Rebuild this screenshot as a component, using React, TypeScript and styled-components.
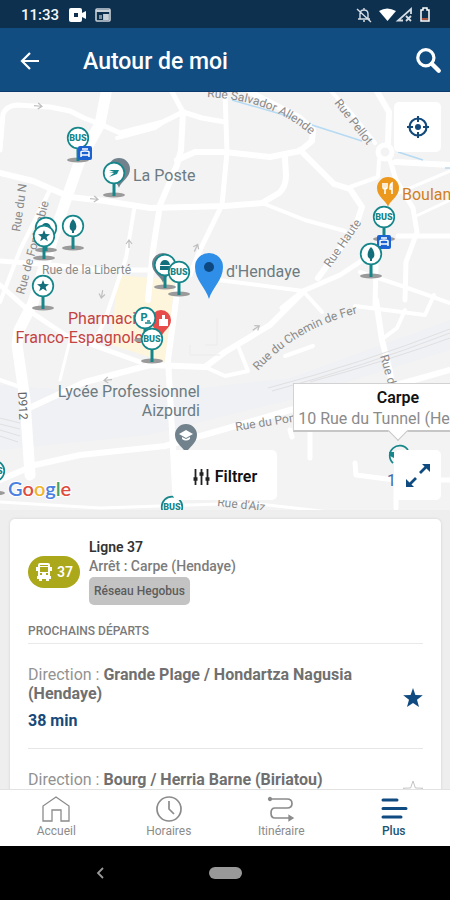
import React from "react";
import styled, { createGlobalStyle } from "styled-components";

const teal = "#16868a";
const navy = "#0f4a80";

const GlobalStyle = createGlobalStyle`
  * { box-sizing: border-box; }
  body { margin: 0; font-family: Roboto, "Liberation Sans", sans-serif; }
  button { border: 0; padding: 0; background: none; font: inherit; color: inherit; cursor: pointer; }
  h1, h2, h3, p, ul { margin: 0; padding: 0; }
  svg { display: block; }
`;

const Screen = styled.div`
  height: 100vh;
  display: flex;
  flex-direction: column;
  overflow: hidden;
  background: #eeeeee;
`;

const StatusBar = styled.div`
  flex: none;
  height: 28px;
  padding: 2px 20px 0 21px;
  display: flex;
  align-items: center;
  justify-content: space-between;
  background: #0d304f;
  color: #f4f7fa;
  font-size: 15px;
  font-weight: 500;
`;

const StatusGroup = styled.div<{ $gap: number }>`
  display: flex;
  align-items: center;
  gap: ${(p) => p.$gap}px;
`;

const Header = styled.header`
  flex: none;
  height: 64px;
  padding: 2px 8px 0 18px;
  display: flex;
  align-items: center;
  background: #124d82;
  border-bottom: 1px solid #0b3a6e;
  color: #ffffff;
`;

const HeaderTitle = styled.h1`
  flex: 1;
  padding: 2px 0 0 41px;
  font-size: 23px;
  line-height: 28px;
  font-weight: 500;
`;

const IconButton = styled.button`
  display: flex;
  align-items: center;
  justify-content: center;
`;

const MapArea = styled.section`
  flex: none;
  height: 418px;
  position: relative;
  overflow: hidden;
  background: #f3f3f3;
`;

const MapCanvas = styled.svg`
  width: 100%;
  height: 100%;
`;

const MapButton = styled.button<{ $edge: "top" | "bottom" }>`
  position: absolute;
  right: 9px;
  ${(p) => p.$edge}: 10px;
  width: 47px;
  height: 50px;
  display: flex;
  align-items: center;
  justify-content: center;
  border-radius: 5px;
  background: #ffffff;
`;

const FilterButton = styled.button`
  position: absolute;
  left: 50%;
  bottom: 10px;
  transform: translateX(-50%);
  width: 104px;
  height: 50px;
  padding-top: 3px;
  display: flex;
  align-items: center;
  justify-content: center;
  gap: 5px;
  border-radius: 5px;
  background: #ffffff;
  color: #111111;
  font-size: 16px;
  font-weight: 600;
`;

const Callout = styled.div`
  position: absolute;
  right: -53px;
  top: 291px;
  width: 210px;
  height: 49px;
  padding: 4px 0;
  background: #ffffff;
  border: 1px solid #d2d2d2;
  border-bottom: 2px solid #c6c6c6;
  text-align: center;
  &::after {
    content: "";
    position: absolute;
    left: 50%;
    bottom: -8px;
    width: 13px;
    height: 13px;
    margin-left: -7px;
    background: #ffffff;
    border: solid #c6c6c6;
    border-width: 0 1px 1px 0;
    transform: rotate(45deg);
  }
`;

const CalloutTitle = styled.h2`
  font-size: 16px;
  line-height: 19px;
  font-weight: 600;
  color: #111111;
`;

const CalloutText = styled.p`
  position: relative;
  z-index: 1;
  font-size: 16px;
  line-height: 23px;
  color: #8b8b8b;
  white-space: nowrap;
`;

const Sheet = styled.main`
  flex: 1;
  min-height: 0;
  overflow: hidden;
  padding: 9px 9px 0 10px;
`;

const Card = styled.article`
  padding: 19px 18px;
  background: #ffffff;
  border-radius: 5px;
  box-shadow: 0 0 3px rgba(0, 0, 0, 0.12);
`;

const LineHeader = styled.div`
  display: flex;
  align-items: center;
  gap: 9px;
`;

const LineBadge = styled.span`
  width: 52px;
  height: 32px;
  display: flex;
  align-items: center;
  justify-content: center;
  gap: 4px;
  border-radius: 16px;
  background: #aba81b;
  color: #ffffff;
  font-size: 14px;
  font-weight: 600;
`;

const LineInfo = styled.div`
  display: flex;
  flex-direction: column;
  align-items: flex-start;
`;

const LineName = styled.h2`
  font-size: 14px;
  line-height: 18px;
  font-weight: 600;
  color: #333333;
`;

const StopName = styled.p`
  font-size: 14px;
  line-height: 20px;
  font-weight: 500;
  color: #7c7c7c;
`;

const NetworkTag = styled.span`
  height: 28px;
  margin-top: 1px;
  padding: 0 5px;
  border-radius: 5px;
  background: #c3c3c3;
  color: #5c5c5c;
  font-size: 12px;
  line-height: 29px;
  font-weight: 500;
`;

const SectionTitle = styled.h3`
  margin-top: 18px;
  padding-bottom: 4px;
  border-bottom: 1px solid #e9e9e9;
  font-size: 12px;
  line-height: 16px;
  font-weight: 500;
  color: #7a7a7a;
`;

const DepartureList = styled.ul`
  list-style: none;
`;

const Departure = styled.li`
  display: flex;
  align-items: center;
  justify-content: space-between;
  padding: 21px 0 17px;
  border-bottom: 1px solid #e6e6e6;
`;

const DepartureText = styled.div`
  flex: 1;
  min-height: 42px;
  padding-right: 30px;
`;

const Direction = styled.p`
  font-size: 16px;
  line-height: 19px;
  color: #929292;
  b {
    font-weight: 700;
    color: #707070;
  }
`;

const Delay = styled.p`
  margin-top: 7px;
  font-size: 16px;
  line-height: 21px;
  font-weight: 700;
  color: #17497b;
`;

const TabBar = styled.nav`
  flex: none;
  height: 57px;
  display: grid;
  grid-template-columns: repeat(4, 1fr);
  background: #ffffff;
  border-top: 1px solid #e2e2e2;
`;

const Tab = styled.button<{ $active?: boolean }>`
  display: flex;
  flex-direction: column;
  align-items: center;
  padding-top: 5px;
  gap: 1px;
  font-size: 12px;
  line-height: 14px;
  color: ${(p) => (p.$active ? "#1c5476" : "#8b8b8b")};
  font-weight: ${(p) => (p.$active ? 500 : 400)};
`;

const SystemNav = styled.div`
  flex: none;
  height: 54px;
  display: grid;
  grid-template-columns: 200px 1fr 200px;
  align-items: center;
  justify-items: center;
  background: #000000;
  color: #999999;
`;

const HomePill = styled.button`
  width: 33px;
  height: 12px;
  border-radius: 6px;
  background: #999999;
`;

const roads: [string, number][] = [
  ["M0 150 L3 114 Q6 106 17 105 L50 107 L70 111 L84 118 L100 124", 5],
  ["M107 88 L100 124 L80 160 L67 197 L50 247 L33 303 L19 330 L17 345 L25 400 L30 475", 11],
  ["M100 124 L120 133 L163 122 L183 112 L170 88", 5],
  ["M117 138 L155 128 L168 119", 4],
  ["M183 112 L181 150 L177 165 L160 205 L153 250 L148 300", 6],
  ["M183 112 L202 118 L225 122", 5],
  ["M0 173 L33 181 L70 197 L105 201 L150 208 L225 206 L262 203 L279 193 Q286 187 286 175 L285 158", 6],
  ["M177 160 L195 152 L225 152 L270 157 L300 151 L312 141 L313 130 L300 118 L250 92", 6],
  ["M225 92 L227 152 L222 205 L200 250 L190 275", 5],
  ["M262 203 L305 220 L345 231", 4],
  ["M300 150 L334 184 L350 189 L362 207 L355 228 L318 278", 6],
  ["M350 187 L378 177 L379 160", 4],
  ["M330 90 L352 114 L375 143", 4],
  ["M375 88 L389 112 L388 143", 6],
  ["M396 162 L450 165", 6],
  ["M390 160 L396 180 L413 208 L417 232 L406 262 L405 300", 5],
  ["M396 194 L450 171", 3],
  ["M414 217 L450 200", 3],
  ["M398 236 L450 236", 5],
  ["M375 252 L340 275 L303 291 L282 308", 5],
  ["M218 280 L250 284 L303 291 L322 312", 4],
  ["M360 272 L405 287 L450 303", 4],
  ["M376 265 L375 306", 5],
  ["M0 261 L40 264 L100 270 L165 270", 5],
  ["M50 190 L20 250 L0 302", 4],
  ["M0 285 L28 310 L65 335 L140 362", 5],
  ["M134 210 L126 258 L105 320 L93 345", 4],
  ["M70 340 L60 380", 3],
  ["M25 410 L85 382 L150 365 L205 367 L225 352 L270 325 L303 292", 6],
  ["M178 285 L168 360 L172 430 L176 510", 6],
  ["M205 367 L225 376 L248 371 L238 346", 4],
  ["M0 480 L35 465 L80 455 L165 446 L225 429 L290 410 L400 384 L450 370", 6],
  ["M0 380 L20 387", 4],
  ["M355 306 L425 315 L434 295", 4],
  ["M376 300 L382 340 L390 372 L394 400", 6],
  ["M405 310 L397 328 L385 337", 4],
  ["M285 356 L313 346", 4],
  ["M310 428 L310 458", 5],
  ["M290 430 L292 437 M355 463 L356 475 L395 480 L450 480 M396 480 L396 508", 5],
  ["M0 502 L100 508 L250 503 L330 512", 3],
];

type Glyph = "bus" | "star" | "leaf" | "post" | "shop" | "park";

const glyphs: Record<Glyph, React.ReactNode> = {
  bus: (
    <text y="3" textAnchor="middle" fontSize="9" fontWeight="900" fill={teal}>
      BUS
    </text>
  ),
  star: <path d="M0-6 1.6-2 6-1.8 2.6 1 3.8 5.2 0 2.8-3.8 5.2-2.6 1-6-1.8-1.6-2Z" fill="#126f7b" />,
  leaf: <path d="M0-7C3-4 4 0 3 3L1 5V7H-1V5L-3 3C-4 0-3-4 0-7Z" fill="#126f7b" />,
  post: <path d="M-5-3H5L3 1-5 4 0 0H-5L0-1Z" fill={teal} />,
  shop: <path d="M-5 0Q-4-5 0-5T5 0ZM-5 1H5V5H-5Z" fill="#126f7b" />,
  park: (
    <>
      <text x="-1" y="3" textAnchor="middle" fontSize="11" fontWeight="800" fill={teal}>
        P
      </text>
      <path d="M0 5H6M2 3H5" stroke={teal} strokeWidth="1.3" />
    </>
  ),
};

const StopMarker = ({ x, y, glyph }: { x: number; y: number; glyph: Glyph }) => (
  <g transform={`translate(${x} ${y})`}>
    <ellipse cy="22" rx="11" ry="2.4" fill="#9a9a9a" />
    <path d="M0 10V23" stroke={teal} strokeWidth="3" />
    <circle r="10.3" fill="#ffffff" stroke={teal} strokeWidth="1.7" />
    {glyphs[glyph]}
  </g>
);

const PlacePin = ({ x, y, r, fill, children }: { x: number; y: number; r: number; fill: string; children?: React.ReactNode }) => (
  <g transform={`translate(${x} ${y})`}>
    <g transform={`scale(${r / 10})`}>
      <path d="M0 17C-2 11-10 8-10 0A10 10 0 0 1 10 0C10 8 2 11 0 17Z" fill={fill} />
    </g>
    {children}
  </g>
);

const TramBadge = ({ x, y }: { x: number; y: number }) => (
  <g transform={`translate(${x} ${y})`}>
    <rect x="-7" y="-7" width="14" height="14" rx="2" fill="#1c62d1" />
    <path d="M-3-4H3M-4 4V-1Q-4-2 0-2T4-1V4M-4 2H4" fill="none" stroke="#ffffff" strokeWidth="1.5" />
  </g>
);

const OneWayArrow = ({ x, y, angle }: { x: number; y: number; angle: number }) => (
  <path
    transform={`translate(${x} ${y}) rotate(${angle})`}
    d="M-4 0H3M0-3 4 0 0 3"
    fill="none"
    stroke="#bfbfbf"
    strokeWidth="1.2"
  />
);

const StreetMap = () => (
  <MapCanvas
    viewBox="0 92 450 418"
    preserveAspectRatio="xMidYMid slice"
    fontFamily='Roboto, "Liberation Sans", sans-serif'
    role="img"
    aria-label="Hendaye"
  >
    <path d="M0 385 L140 395 L290 378 L450 320 V350 L290 400 L150 435 L0 450Z" fill="#f0f1f4" />
    <path d="M117 275 L175 280 L165 362 L112 345Z" fill="#fdf5dc" />
    <g fill="none" stroke="#ffffff" strokeLinecap="round" strokeLinejoin="round">
      {roads.map(([d, w]) => (
        <path key={d} d={d} strokeWidth={w} />
      ))}
    </g>
    <circle cx="385" cy="152" r="7" fill="#f3f3f3" stroke="#ffffff" strokeWidth="5" />
    <path
      d="M268 388 Q360 364 450 329M272 391 Q362 367 450 333M310 382 Q390 360 450 338M0 418 L20 423M0 424 L20 429M0 430 L20 436M0 436 L18 442"
      fill="none"
      stroke="#e0e0e2"
    />
    <path d="M205 345 H217 V318 M190 345 V355 H220" fill="none" stroke="#ebebeb" />
    <path d="M232 100 L291 117M312 125 L362 141M398 152 L423 160M445 168H450" stroke="#b5daf3" strokeWidth="1.5" />

    <OneWayArrow x={38} y={106} angle={5} />
    <OneWayArrow x={94} y={199} angle={5} />
    <OneWayArrow x={129} y={244} angle={-90} />
    <OneWayArrow x={102} y={294} angle={100} />
    <OneWayArrow x={196} y={248} angle={-65} />
    <OneWayArrow x={108} y={380} angle={175} />
    <OneWayArrow x={256} y={328} angle={-35} />

    <defs>
      <path id="allende" d="M207 97 Q272 100 312 136" />
      <path id="fer" d="M258 371 Q300 325 364 312" />
    </defs>
    <g fill="#8a8a8a" fontSize="12">
      <text>
        <textPath href="#allende">Rue Salvador Allende</textPath>
      </text>
      <text>
        <textPath href="#fer">Rue du Chemin de Fer</textPath>
      </text>
      <text transform="translate(334 103) rotate(52)">Rue Pellot</text>
      <text transform="translate(330 268) rotate(-55)">Rue Haute</text>
      <text transform="translate(20 232) rotate(-82)">Rue du N</text>
      <text transform="translate(24 295) rotate(-75)">Rue de Fontarabie</text>
      <text x="42" y="274">Rue de la Liberté</text>
      <text transform="translate(236 431) rotate(-9)">Rue du Pont</text>
      <text transform="translate(380 356) rotate(74)">Rue du</text>
      <text transform="translate(217 506) rotate(6)">Rue d'Aiz</text>
      <text transform="translate(18 392) rotate(87)" fill="#666666">
        D912
      </text>
    </g>
    <g fontSize="16" fill="#6c7b82">
      <text x="133" y="181">La Poste</text>
      <text x="226" y="277">d'Hendaye</text>
      <text x="200" y="397" textAnchor="end">Lycée Professionnel</text>
      <text x="200" y="416" textAnchor="end">Aizpurdi</text>
      <text x="402" y="200" fill="#d17f22">Boulangerie</text>
      <text x="68" y="324" fill="#c44343">Pharmaci</text>
      <text x="143" y="343" textAnchor="end" fill="#c44343">Franco-Espagnole</text>
    </g>

    <PlacePin x={119} y={169} r={11} fill="#71828c" />
    <PlacePin x={163} y={264} r={11} fill="#71828c" />
    <PlacePin x={161} y={320} r={10} fill="#e64c4a">
      <path d="M-2-1H1V-5H4V-1H7V6H-2Z" fill="#ffffff" />
    </PlacePin>
    <PlacePin x={388} y={188} r={11} fill="#eb981d">
      <path d="M-5-5V-1Q-5 1-3 1T-1-1V-5M-3-5V6M4 6V-5Q2-4 2 1H4" fill="none" stroke="#ffffff" strokeWidth="1.6" />
    </PlacePin>
    <PlacePin x={186} y={435} r={11} fill="#71828c">
      <path d="M-7-1 0-5 7-1 0 3ZM-4 2V4Q0 7 4 4V2L0 4Z" fill="#ffffff" />
    </PlacePin>

    <StopMarker x={78} y={138} glyph="bus" />
    <TramBadge x={85} y={153} />
    <StopMarker x={114} y={173} glyph="post" />
    <StopMarker x={46} y={228} glyph="shop" />
    <StopMarker x={44} y={236} glyph="star" />
    <StopMarker x={73} y={226} glyph="leaf" />
    <StopMarker x={43} y={286} glyph="star" />
    <StopMarker x={165} y={265} glyph="shop" />
    <StopMarker x={179} y={272} glyph="bus" />
    <StopMarker x={145} y={318} glyph="park" />
    <StopMarker x={152} y={339} glyph="bus" />
    <StopMarker x={384} y={217} glyph="bus" />
    <TramBadge x={384} y={242} />
    <StopMarker x={371} y={254} glyph="leaf" />
    <StopMarker x={172} y={507} glyph="bus" />
    <StopMarker x={-6} y={471} glyph="bus" />
    <g transform="translate(398 454)">
      <path d="M-5 9A10 10 0 1 1 10-4" fill="none" stroke={teal} strokeWidth="1.7" />
      <path d="M-9-2H-4V4L-8 2Z" fill={teal} />
    </g>
    <text x="387" y="486" fontSize="16" fill="#3f66a8">1</text>

    <path d="M209 299C206 288 195 280 195 267A14 14 0 0 1 223 267C223 280 212 288 209 299Z" fill="#2f8ee8" />
    <circle cx="209" cy="267" r="5" fill="#0d477f" />

    <text x="8" y="496" fontFamily='Lato, "Open Sans", sans-serif' fontSize="20" fontWeight="600" stroke="#ffffff" strokeWidth="2" paintOrder="stroke">
      <tspan fill="#4a80df">G</tspan>
      <tspan fill="#dc4c40">o</tspan>
      <tspan fill="#eeb52d">o</tspan>
      <tspan fill="#4a80df">g</tspan>
      <tspan fill="#45a35b">l</tspan>
      <tspan fill="#dc4c40">e</tspan>
    </text>
  </MapCanvas>
);

const StatusIcons = () => (
  <StatusGroup $gap={7} aria-hidden="true">
    <svg width="16" height="16" viewBox="0 0 16 16" fill="none" stroke="#d6dde4" strokeWidth="1.4">
      <path d="M4 12V7Q4 3 8 3T12 7V12M2 12H14M8 1V3M7 14H9M1 2 15 15" />
    </svg>
    <svg width="34" height="16" viewBox="0 0 34 16">
      <path d="M0 4Q8-1 17 4L8.500 14Z" fill="#ffffff" />
      <path d="M24 13.500H19L32 2V7M27 9 32 14M32 9 27 14" fill="none" stroke="#d6dde4" strokeWidth="1.8" />
    </svg>
    <svg width="10" height="16" viewBox="0 0 10 16">
      <path d="M1 3H3V1H7V3H9V14H1Z" fill="none" stroke="#ffffff" strokeWidth="1.5" />
      <path d="M2 11H8V13H2Z" fill="#a8543f" />
    </svg>
  </StatusGroup>
);

const BusIcon = () => (
  <svg width="18" height="20" viewBox="0 0 18 20" aria-hidden="true">
    <path
      fillRule="evenodd"
      d="M3 3Q3 1 5 1H13Q15 1 15 3V5H17V9H15V14H3V9H1V5H3ZM5 3V4H13V3ZM5 5V10H13V5ZM5 11V13H7V11ZM11 11V13H13V11Z"
      fill="#ffffff"
    />
    <path d="M2 14H16V17H14V19H11V17H7V19H4V17H2Z" fill="#ffffff" />
  </svg>
);

const Star = ({ filled }: { filled?: boolean }) => (
  <svg width="20" height="20" viewBox="0 0 20 20" aria-hidden="true">
    <path
      d="M10 0 12.400 7 19.800 7.200 14 11.800 16 19 10 15 4 19 6 11.800 .2 7.200 7.600 7Z"
      fill={filled ? navy : "#ffffff"}
      stroke={filled ? navy : "#c4c4c4"}
      strokeWidth={filled ? 0 : 1}
    />
  </svg>
);

const departures = [
  { to: "Grande Plage / Hondartza Nagusia (Hendaye)", delay: "38 min", favourite: true },
  { to: "Bourg / Herria Barne (Biriatou)", delay: "", favourite: false },
];

const tabs = [
  { label: "Accueil", icon: <path d="M2 26V11L15 2 28 11V26H20V15H11V26Z" /> },
  {
    label: "Horaires",
    icon: (
      <>
        <circle cx="15" cy="14" r="12" strokeWidth="1.7" />
        <path d="M15 6V14L20 19" strokeWidth="1.7" />
      </>
    ),
  },
  {
    label: "Itinéraire",
    icon: (
      <>
        <path d="M4 4H21Q26 4 26 8.500T21 13H9Q5 13 5 18T9 23H23" strokeWidth="1.7" />
        <circle cx="4" cy="4" r="1.5" fill="currentColor" />
        <path d="M23 20.500 27 23 23 25.500Z" fill="currentColor" />
      </>
    ),
  },
  {
    label: "Plus",
    active: true,
    icon: <path d="M4 5H18M4 13.500H27M4 22H22" stroke={navy} strokeWidth="3" strokeLinecap="round" />,
  },
];

export default function App() {
  return (
    <Screen>
      <GlobalStyle />
      <StatusBar>
        <StatusGroup $gap={7}>
          <span>11:33</span>
          <svg width="48" height="16" viewBox="0 0 48 16" aria-hidden="true">
            <path fillRule="evenodd" d="M5 1H14Q16 1 16 3V6L20 4V12L16 10V13Q16 15 14 15H5Q3 15 3 13V3Q3 1 5 1ZM8 6V10H12V6Z" fill="#ffffff" />
            <rect x="30" y="2" width="14" height="12" rx="1" fill="none" stroke="#c9d1d8" strokeWidth="1.6" />
            <path d="M30 4H44M38 8H42V12H38Z" stroke="#c9d1d8" strokeWidth="1.8" fill="#c9d1d8" />
            <path d="M33 8H36V12H33Z" fill="#81929f" />
          </svg>
        </StatusGroup>
        <StatusIcons />
      </StatusBar>

      <Header>
        <IconButton aria-label="Retour">
          <svg width="24" height="24" viewBox="0 0 24 24" fill="none" stroke="#ffffff" strokeWidth="2.200">
            <path d="M21 12H4M12 4 4 12 12 20" />
          </svg>
        </IconButton>
        <HeaderTitle>Autour de moi</HeaderTitle>
        <IconButton aria-label="Rechercher">
          <svg width="28" height="28" viewBox="0 0 26 26" fill="none" stroke="#ffffff">
            <circle cx="11" cy="10" r="7.500" strokeWidth="3" />
            <path d="M16.500 15.500 23 22" strokeWidth="4" strokeLinecap="round" />
          </svg>
        </IconButton>
      </Header>

      <MapArea>
        <StreetMap />
        <Callout>
          <CalloutTitle>Carpe</CalloutTitle>
          <CalloutText>10 Rue du Tunnel (Hendaye)</CalloutText>
        </Callout>
        <MapButton $edge="top" aria-label="Me localiser">
          <svg width="24" height="24" viewBox="0 0 24 24" fill="none" stroke="#124a7c">
            <circle cx="12" cy="12" r="8.500" strokeWidth="2.200" />
            <circle cx="12" cy="12" r="3" fill="#124a7c" stroke="none" />
            <path d="M12 1V7M12 17V23M1 12H7M17 12H23" strokeWidth="2" />
          </svg>
        </MapButton>
        <FilterButton>
          <svg width="17" height="18" viewBox="0 0 17 18" fill="none" stroke="#222222" aria-hidden="true">
            <path d="M2.500 1V17M8.500 1V17M14.500 1V17" strokeWidth="1.800" />
            <path d="M.5 11H4.500M6.500 6H10.500M12.500 11H16.500" strokeWidth="3.500" />
          </svg>
          Filtrer
        </FilterButton>
        <MapButton $edge="bottom" aria-label="Agrandir la carte">
          <svg width="26" height="26" viewBox="0 0 26 26" aria-hidden="true">
            <path d="M15 11 22 4M11 16 4 23" stroke={navy} strokeWidth="2.800" fill="none" />
            <path d="M17 2H25V10ZM1 17V25H9Z" fill={navy} />
          </svg>
        </MapButton>
      </MapArea>

      <Sheet>
        <Card>
          <LineHeader>
            <LineBadge>
              <BusIcon />
              37
            </LineBadge>
            <LineInfo>
              <LineName>Ligne 37</LineName>
              <StopName>Arrêt : Carpe (Hendaye)</StopName>
              <NetworkTag>Réseau Hegobus</NetworkTag>
            </LineInfo>
          </LineHeader>
          <SectionTitle>PROCHAINS DÉPARTS</SectionTitle>
          <DepartureList>
            {departures.map((d) => (
              <Departure key={d.to}>
                <DepartureText>
                  <Direction>
                    Direction : <b>{d.to}</b>
                  </Direction>
                  {d.delay && <Delay>{d.delay}</Delay>}
                </DepartureText>
                <IconButton aria-label="Favori" aria-pressed={d.favourite}>
                  <Star filled={d.favourite} />
                </IconButton>
              </Departure>
            ))}
          </DepartureList>
        </Card>
      </Sheet>

      <TabBar>
        {tabs.map((t) => (
          <Tab key={t.label} $active={t.active}>
            <svg width="30" height="28" viewBox="0 0 30 28" fill="none" stroke="currentColor" strokeWidth="1.300" aria-hidden="true">
              {t.icon}
            </svg>
            {t.label}
          </Tab>
        ))}
      </TabBar>

      <SystemNav>
        <IconButton aria-label="Précédent">
          <svg width="10" height="14" viewBox="0 0 10 14" fill="none" stroke="currentColor" strokeWidth="1.800">
            <path d="M8 2 3 7 8 12" />
          </svg>
        </IconButton>
        <HomePill aria-label="Écran d'accueil" />
      </SystemNav>
    </Screen>
  );
}
